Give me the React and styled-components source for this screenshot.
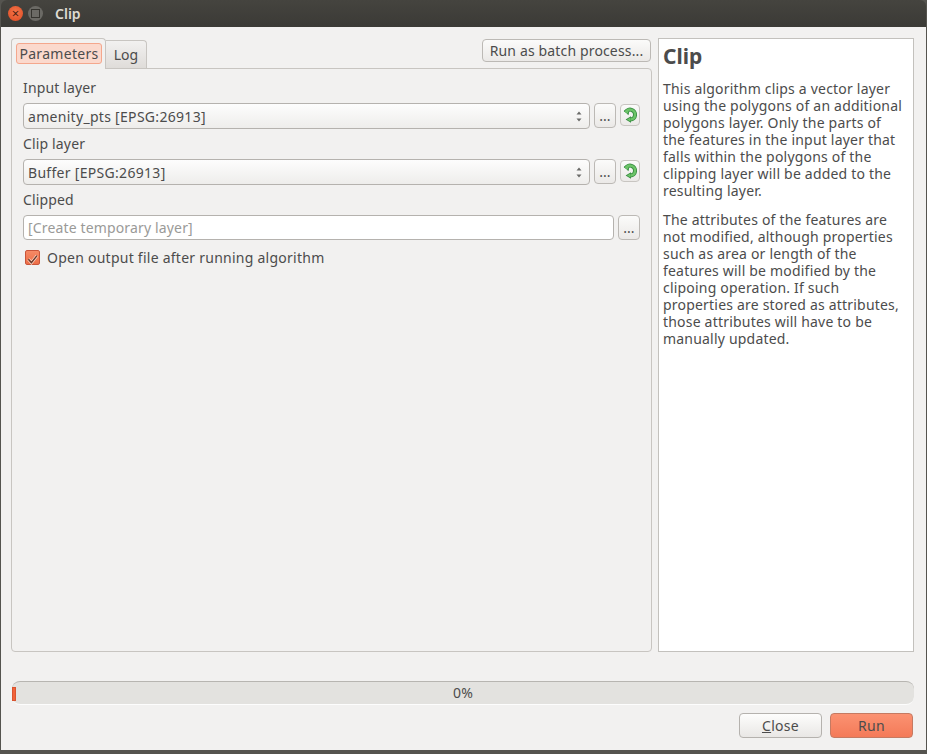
import styled, { createGlobalStyle } from 'styled-components';

const GlobalStyle = createGlobalStyle`
    html, body {
        margin: 0;
        padding: 0;
        background: #55544f;
    }
    * {
        box-sizing: border-box;
    }
`;

const helpParagraphs = [
    [
        'This algorithm clips a vector layer',
        'using the polygons of an additional',
        'polygons layer. Only the parts of',
        'the features in the input layer that',
        'falls within the polygons of the',
        'clipping layer will be added to the',
        'resulting layer.',
    ],
    [
        'The attributes of the features are',
        'not modified, although properties',
        'such as area or length of the',
        'features will be modified by the',
        'clipoing operation. If such',
        'properties are stored as attributes,',
        'those attributes will have to be',
        'manually updated.',
    ],
];

const RefreshIcon = () => (
    <svg width="16" height="16" viewBox="0 0 16 16">
        <path d="M3.6 5.4 A5 5 0 1 1 8.4 12.6" fill="none" stroke="#35893f" strokeWidth="4" />
        <path d="M9 9.2 L9 15.8 L3.6 12.5 Z M1.8 3.4 L7.8 2.6 L6.4 8.2 Z" fill="#35893f" />
        <path d="M3.6 5.4 A5 5 0 1 1 8.4 12.6" fill="none" stroke="#6cc468" strokeWidth="2.4" />
        <path d="M8.3 10.5 L8.3 14.4 L5 12.5 Z M3.2 4 L6.8 3.6 L5.9 6.8 Z" fill="#6cc468" />
    </svg>
);

const ComboArrows = () => (
    <svg width="8" height="13" viewBox="0 0 8 13">
        <path d="M4 1.5 L6.5 4.5 L1.5 4.5 Z M4 11.5 L1.5 8.5 L6.5 8.5 Z" fill="#6a6a68" />
    </svg>
);

const CheckMark = () => (
    <svg width="13" height="13" viewBox="0 0 13 13">
        <path d="M2.4 6.2 L5.4 9.6 L11 2.6" fill="none" stroke="#fbd4c4" strokeWidth="3" />
        <path d="M2.4 6.2 L5.4 9.6 L11 2.6" fill="none" stroke="#6a3626" strokeWidth="1.5" />
    </svg>
);

const App = () => {
    return (
        <>
            <GlobalStyle />
            <Screen>
                <TitleBar>
                    <CloseDot>×</CloseDot>
                    <MaxDot />
                    <WindowTitle>Clip</WindowTitle>
                </TitleBar>
                <Body>
                    <Columns>
                        <LeftColumn>
                            <TabRow>
                                <Tabs>
                                    <ActiveTab>
                                        <TabFocus>Parameters</TabFocus>
                                    </ActiveTab>
                                    <Tab>Log</Tab>
                                </Tabs>
                                <BatchButton>Run as batch process...</BatchButton>
                            </TabRow>
                            <Pane>
                                <FieldLabel>Input layer</FieldLabel>
                                <FieldRow>
                                    <Combo>
                                        amenity_pts [EPSG:26913]
                                        <ComboArrows />
                                    </Combo>
                                    <DotsButton>...</DotsButton>
                                    <IconButton>
                                        <RefreshIcon />
                                    </IconButton>
                                </FieldRow>
                                <FieldLabel>Clip layer</FieldLabel>
                                <FieldRow>
                                    <Combo>
                                        Buffer [EPSG:26913]
                                        <ComboArrows />
                                    </Combo>
                                    <DotsButton>...</DotsButton>
                                    <IconButton>
                                        <RefreshIcon />
                                    </IconButton>
                                </FieldRow>
                                <FieldLabel>Clipped</FieldLabel>
                                <FieldRow>
                                    <LineEdit>[Create temporary layer]</LineEdit>
                                    <DotsButton>...</DotsButton>
                                </FieldRow>
                                <CheckRow>
                                    <CheckBox>
                                        <CheckMark />
                                    </CheckBox>
                                    Open output file after running algorithm
                                </CheckRow>
                            </Pane>
                        </LeftColumn>
                        <HelpPanel>
                            <HelpTitle>Clip</HelpTitle>
                            {helpParagraphs.map((lines, index) => (
                                <HelpParagraph key={index}>
                                    {lines.map((line) => (
                                        <HelpLine key={line}>{line}</HelpLine>
                                    ))}
                                </HelpParagraph>
                            ))}
                        </HelpPanel>
                    </Columns>
                    <ProgressBar>
                        <ProgressChunk />
                        0%
                    </ProgressBar>
                    <ButtonRow>
                        <PlainButton>
                            <u>C</u>lose
                        </PlainButton>
                        <RunButton>Run</RunButton>
                    </ButtonRow>
                </Body>
            </Screen>
        </>
    );
};

const Screen = styled.div`
    width: 927px;
    height: 754px;
    overflow: hidden;
    padding: 0 1px 4px 1px;
    display: flex;
    flex-direction: column;
    font-family: 'Noto Sans', 'Open Sans', sans-serif;
    font-size: 14px;
    color: #4c4c4c;
`;
const TitleBar = styled.div`
    height: 27px;
    flex: none;
    display: flex;
    align-items: center;
    padding-left: 7px;
    background: linear-gradient(#45443f, #3b3a36);
    border-radius: 6px 6px 0 0;
`;
const CloseDot = styled.div`
    width: 15px;
    height: 15px;
    border-radius: 50%;
    background: radial-gradient(circle at 50% 40%, #f4754a, #dd4a22);
    color: #4a2012;
    font-size: 13px;
    line-height: 14px;
    text-align: center;
`;
const MaxDot = styled.div`
    width: 15px;
    height: 15px;
    margin-left: 5px;
    border-radius: 50%;
    background: #6b6a65;
    display: flex;
    align-items: center;
    justify-content: center;
    &::after {
        content: '';
        width: 7px;
        height: 7px;
        border: 1px solid #35342f;
    }
`;
const WindowTitle = styled.div`
    margin-left: 12px;
    color: #dfdbd2;
    font-weight: 600;
    font-size: 14px;
`;
const Body = styled.div`
    flex: 1;
    display: flex;
    flex-direction: column;
    padding: 11px 12px 12px 10px;
    background: #f2f1f0;
`;
const Columns = styled.div`
    height: 614px;
    flex: none;
    display: flex;
    gap: 6px;
`;
const LeftColumn = styled.div`
    width: 641px;
    display: flex;
    flex-direction: column;
`;
const TabRow = styled.div`
    height: 31px;
    flex: none;
    display: flex;
    justify-content: space-between;
    align-items: flex-start;
`;
const Tabs = styled.div`
    display: flex;
    align-items: flex-end;
    height: 31px;
    position: relative;
    z-index: 1;
`;
const ActiveTab = styled.div`
    width: 95px;
    height: 31px;
    padding: 4px 3px 0 4px;
    background: #f2f1f0;
    border: 1px solid #c8c5c1;
    border-bottom: none;
    border-radius: 4px 4px 0 0;
`;
const TabFocus = styled.div`
    height: 21px;
    line-height: 19px;
    text-align: center;
    background: #fbd9cd;
    border: 1px solid #f4a78d;
    border-radius: 3px;
    letter-spacing: 0.3px;
`;
const Tab = styled.div`
    width: 41px;
    height: 28px;
    margin-bottom: 1px;
    line-height: 28px;
    text-align: center;
    background: linear-gradient(#f2f1f0, #dfdcd9);
    border: 1px solid #c8c5c1;
    border-bottom: none;
    border-left: none;
    border-radius: 0 4px 0 0;
`;
const BatchButton = styled.div`
    width: 169px;
    height: 23px;
    margin-top: 1px;
    margin-right: 1px;
    line-height: 21px;
    text-align: center;
    background: linear-gradient(#fbfbfa, #ebe9e7);
    border: 1px solid #bcb9b5;
    border-radius: 4px;
    letter-spacing: 0.15px;
`;
const Pane = styled.div`
    flex: 1;
    display: flex;
    flex-direction: column;
    margin-top: -1px;
    padding: 8px 11px 0 11px;
    border: 1px solid #c8c5c1;
    border-radius: 0 4px 4px 4px;
`;
const FieldLabel = styled.div`
    height: 21px;
    line-height: 21px;
    margin-bottom: 5px;
    letter-spacing: 0.15px;
`;
const FieldRow = styled.div`
    height: 26px;
    margin-bottom: 4px;
    display: flex;
    align-items: flex-start;
    gap: 4px;
`;
const Combo = styled.div`
    flex: 1;
    height: 26px;
    padding: 0 6px 0 4px;
    display: flex;
    align-items: center;
    justify-content: space-between;
    background: linear-gradient(#fdfdfd, #eeedeb);
    border: 1px solid #b5b2ae;
    border-radius: 4px;
    letter-spacing: 0.3px;
`;
const LineEdit = styled.div`
    flex: 1;
    height: 25px;
    padding-left: 4px;
    line-height: 23px;
    background: #ffffff;
    border: 1px solid #b5b2ae;
    border-radius: 4px;
    color: #9a9a98;
    letter-spacing: 0.15px;
`;
const DotsButton = styled.div`
    width: 22px;
    height: 25px;
    flex: none;
    line-height: 23px;
    text-align: center;
    background: linear-gradient(#fbfbfa, #ebe9e7);
    border: 1px solid #bcb9b5;
    border-radius: 4px;
    font-size: 14px;
`;
const IconButton = styled.div`
    width: 20px;
    height: 22px;
    flex: none;
    margin-top: 1px;
    display: flex;
    align-items: center;
    justify-content: center;
    background: linear-gradient(#fbfbfa, #ebe9e7);
    border: 1px solid #c8c5c1;
    border-radius: 4px;
`;
const CheckRow = styled.div`
    display: flex;
    align-items: center;
    gap: 7px;
    height: 20px;
    padding-left: 2px;
    margin-top: 2px;
    letter-spacing: 0.25px;
`;
const CheckBox = styled.div`
    width: 15px;
    height: 15px;
    background: linear-gradient(#f58a66, #ee6f48);
    border: 1px solid #c9553a;
    border-radius: 2px;
`;
const HelpPanel = styled.div`
    flex: 1;
    padding: 0 4px;
    background: #ffffff;
    border: 1px solid #c3c1bd;
`;
const HelpTitle = styled.h1`
    margin: 0 0 8px 0;
    height: 33px;
    line-height: 35px;
    font-size: 21px;
    font-weight: 700;
    color: #4c4c4c;
`;
const HelpParagraph = styled.div`
    margin-bottom: 12px;
`;
const HelpLine = styled.div`
    height: 17px;
    line-height: 17px;
    white-space: nowrap;
    letter-spacing: 0.2px;
`;
const ProgressBar = styled.div`
    position: relative;
    margin-top: 29px;
    margin-left: 1px;
    height: 24px;
    line-height: 22px;
    text-align: center;
    background: #e3e2df;
    border-top: 1px solid #b7b5b1;
    border-bottom: 1px solid #fdfdfd;
    border-radius: 8px;
    letter-spacing: 0.3px;
`;
const ProgressChunk = styled.div`
    position: absolute;
    left: 0;
    top: 5px;
    width: 4px;
    height: 14px;
    background: #f2633a;
    border: 1px solid #d9542f;
`;
const ButtonRow = styled.div`
    margin-top: 8px;
    display: flex;
    justify-content: flex-end;
    gap: 8px;
    padding-right: 1px;
`;
const PlainButton = styled.div`
    width: 83px;
    height: 25px;
    line-height: 24px;
    text-align: center;
    background: linear-gradient(#fdfdfc, #e9e7e5);
    border: 1px solid #b5b2ae;
    border-radius: 4px;
    letter-spacing: 0.3px;
`;
const RunButton = styled(PlainButton)`
    background: linear-gradient(#fb9272, #f47a58);
    border-color: #c57a62;
`;

export default App;
